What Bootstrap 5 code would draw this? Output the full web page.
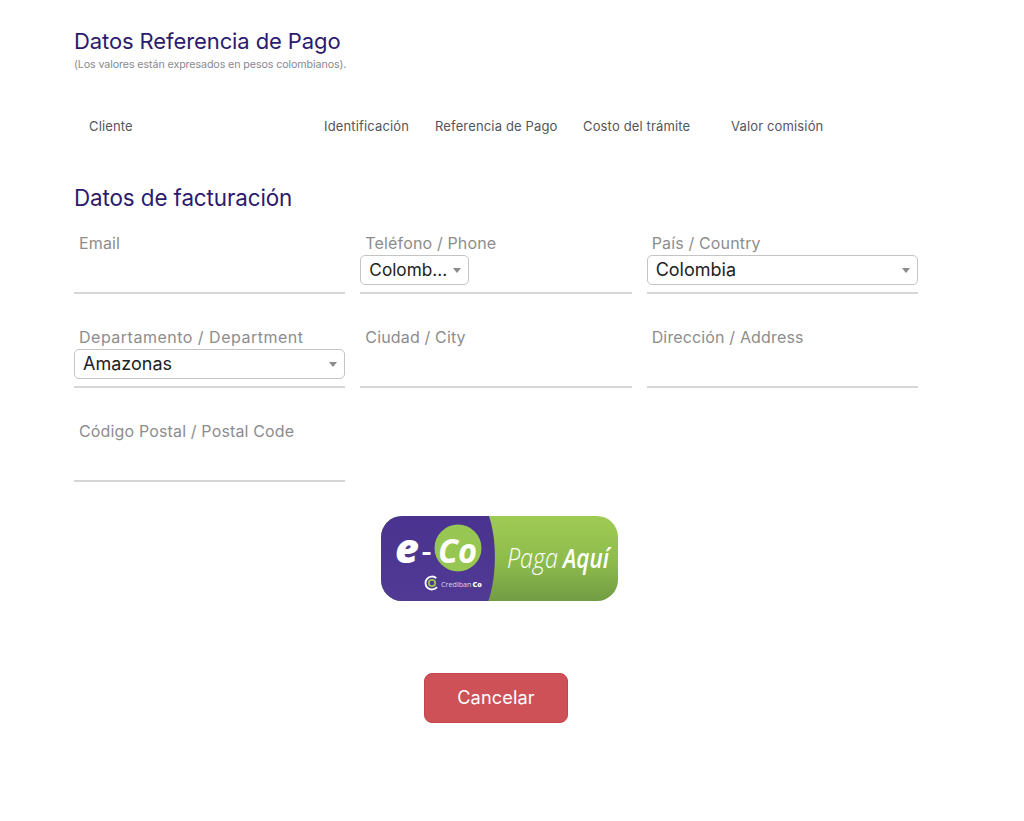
<!DOCTYPE html>
<html lang="es">
<head>
<meta charset="utf-8">
<title>Datos Referencia de Pago</title>
<link href="https://cdn.jsdelivr.net/npm/bootstrap@5.3.0/dist/css/bootstrap.min.css" rel="stylesheet">
<style>
body{font-family:Inter,"Noto Sans","Liberation Sans",sans-serif;background:#fff;color:#212529}
.pay-wrap{width:844px;margin-left:74px;padding-top:27px}
.pay-title{font-size:22px;font-weight:400;color:#2c1a6e;line-height:28px;margin:0;letter-spacing:-.1px}
.pay-note{font-size:10.7px;color:#8a8a90;line-height:14px;margin:3px 0 0;letter-spacing:-.1px}
.pay-table{table-layout:fixed;width:770px;margin:41px 0 0}
.pay-table th{font-size:13px;font-weight:400;color:#55555a;padding:0 0 0 15px;height:28px;border:0;background:transparent;vertical-align:middle;white-space:nowrap;letter-spacing:.15px}
.pay-title.bill-title{font-size:22.4px;margin-top:43px;margin-bottom:2px}
.bill-row{--bs-gutter-x:15px;--bs-gutter-y:0}
.bill-field{height:80px;border-bottom:2px solid #d6d6d6;margin-bottom:14px;position:relative}
.bill-label{display:block;font-size:16px;color:#8d8d8d;line-height:22px;padding:18px 0 0 5px;margin:0;letter-spacing:.15px;white-space:nowrap}
.bill-label-wide{letter-spacing:.5px}
.bill-select{display:block;width:100%;height:30px;font-family:inherit;font-size:18px;color:#222;line-height:28px;padding:0 24px 0 8px;border:1px solid #c4c4c4;border-radius:5px;background:#fff;white-space:nowrap;overflow:hidden;margin-top:1px;position:relative}
.bill-select::after{content:"";position:absolute;right:7px;top:12px;border:4.5px solid transparent;border-top:5px solid #8a8a8a;border-bottom:0}
.bill-select-sm{width:109px;font-size:17.200px;margin-bottom:0}
.logo-zone{height:86px;margin:20px 0 0 -74px;width:999px}
.logo-zone svg{display:block}
.cancel-zone{width:992px;margin:71px 0 0 -74px}
.btn-cancel{width:144px;height:50px;font-size:18.200px;color:#fff;background:#cd5157;border:1px solid #c9444c;border-radius:8px;letter-spacing:.1px;box-shadow:0 12px 18px -10px rgba(0,0,0,.04)}
.btn-cancel:hover{background:#c4474d;color:#fff}
</style>
</head>
<body>
<main class="pay-wrap">
  <h1 class="pay-title">Datos Referencia de Pago</h1>
  <p class="pay-note">(Los valores están expresados en pesos colombianos).</p>

  <table class="table table-borderless pay-table">
    <colgroup><col style="width:235px"><col style="width:111px"><col style="width:148px"><col style="width:148px"><col></colgroup>
    <thead><tr><th>Cliente</th><th>Identificación</th><th>Referencia de Pago</th><th>Costo del trámite</th><th>Valor comisión</th></tr></thead>
  </table>

  <h2 class="pay-title bill-title">Datos de facturación</h2>

  <div class="row bill-row">
    <div class="col-4"><div class="bill-field"><label class="bill-label">Email</label></div></div>
    <div class="col-4"><div class="bill-field"><label class="bill-label">Teléfono / Phone</label><div class="bill-select bill-select-sm">Colomb...</div></div></div>
    <div class="col-4"><div class="bill-field"><label class="bill-label">País / Country</label><div class="bill-select">Colombia</div></div></div>
    <div class="col-4"><div class="bill-field"><label class="bill-label bill-label-wide">Departamento / Department</label><div class="bill-select">Amazonas</div></div></div>
    <div class="col-4"><div class="bill-field"><label class="bill-label">Ciudad / City</label></div></div>
    <div class="col-4"><div class="bill-field"><label class="bill-label">Dirección / Address</label></div></div>
    <div class="col-4"><div class="bill-field"><label class="bill-label">Código Postal / Postal Code</label></div></div>
  </div>

  <div class="logo-zone d-flex justify-content-center">
    <svg width="237" height="86" viewBox="0 0 237 86" role="img" aria-label="e-Co Paga Aquí">
      <defs>
        <linearGradient id="gv" x1="0" y1="0" x2="0" y2="1"><stop offset="0" stop-color="#4a3390"/><stop offset="1" stop-color="#503a94"/></linearGradient>
        <linearGradient id="gg" x1="0" y1="0" x2="0" y2="1"><stop offset="0" stop-color="#9fcb54"/><stop offset=".55" stop-color="#8dbb4b"/><stop offset="1" stop-color="#719b44"/></linearGradient>
        <clipPath id="pill"><rect x="0" y="0" width="237" height="85" rx="21"/></clipPath>
      </defs>
      <g clip-path="url(#pill)">
        <rect width="237" height="86" fill="url(#gg)"/>
        <path d="M0 0H108C116 24 116 60 107 86H0Z" fill="url(#gv)"/>
      </g>
      <circle cx="77" cy="32" r="23.500" fill="#98c652"/>
      <text x="14" y="47" font-family="Open Sans,sans-serif" font-weight="800" font-style="italic" font-size="40" fill="#fff" textLength="24" lengthAdjust="spacingAndGlyphs">e</text>
      <text x="41" y="43" font-family="Open Sans,sans-serif" font-weight="800" font-size="20" fill="#fff" textLength="9" lengthAdjust="spacingAndGlyphs">-</text>
      <text x="57" y="47" font-family="Open Sans,sans-serif" font-weight="700" font-style="italic" font-size="34" fill="#fff" textLength="39" lengthAdjust="spacingAndGlyphs">Co</text>
      <circle cx="51" cy="67" r="6.500" fill="none" stroke="#fff" stroke-width="1.800" stroke-dasharray="30 11" transform="rotate(40 51 67)"/>
      <circle cx="51" cy="67" r="3.200" fill="none" stroke="#98c652" stroke-width="1.800"/>
      <text x="60" y="71" font-family="Open Sans,sans-serif" font-size="7.200" fill="#d9d5ea">Crediban</text>
      <text x="91.500" y="71" font-family="Open Sans,sans-serif" font-size="7.200" font-weight="800" fill="#fff">Co</text>
      <text x="126" y="52" font-family="Open Sans,sans-serif" font-weight="300" font-style="italic" font-size="28" fill="#fff" textLength="51" lengthAdjust="spacingAndGlyphs">Paga</text>
      <text x="182" y="52" font-family="Open Sans,sans-serif" font-weight="600" font-style="italic" font-size="27" fill="#fff" textLength="46" lengthAdjust="spacingAndGlyphs">Aquí</text>
    </svg>
  </div>

  <div class="cancel-zone d-flex justify-content-center">
    <button type="button" class="btn btn-cancel">Cancelar</button>
  </div>
</main>
</body>
</html>
